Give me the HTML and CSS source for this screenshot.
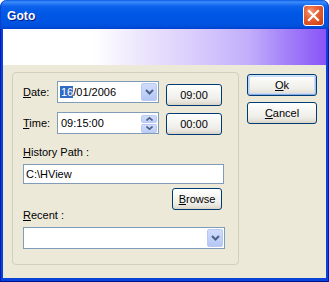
FILE: index.html
```html
<!DOCTYPE html>
<html lang="en">

<head>
    <meta charset="UTF-8">
    <title>Goto</title>
    <link rel="stylesheet" href="styles.css">
</head>

<body>
    <div class="window">
        <div class="titlebar">
            <span class="title">Goto</span>
            <button class="close" type="button" aria-label="Close">
                <svg width="13" height="13" viewBox="0 0 13 13">
                    <path d="M2 2 L11 11 M11 2 L2 11" stroke="#fff" stroke-width="2.2" stroke-linecap="square" />
                </svg>
            </button>
        </div>
        <div class="frame">
            <div class="banner"></div>
            <div class="body">
                <div class="group">
                    <div class="row">
                        <label class="lbl"><u>D</u>ate:</label>
                        <div class="combo">
                            <span class="value"><span class="sel">16</span>/01/2006</span>
                            <span class="drop">
                                <svg width="9" height="6" viewBox="0 0 9 6">
                                    <path d="M1 1 L4.5 4.5 L8 1" fill="none" stroke="#4d6185" stroke-width="2" />
                                </svg>
                            </span>
                        </div>
                        <button class="btn btn-time first" type="button">09:00</button>
                    </div>
                    <div class="row row-time">
                        <label class="lbl"><u>T</u>ime:</label>
                        <div class="combo">
                            <span class="value">09:15:00</span>
                            <span class="spin">
                                <span class="spin-btn">
                                    <svg width="7" height="4" viewBox="0 0 7 4">
                                        <path d="M0.5 3.5 L3.5 0.8 L6.5 3.5" fill="none" stroke="#4d6185" stroke-width="1.6" />
                                    </svg>
                                </span>
                                <span class="spin-btn">
                                    <svg width="7" height="4" viewBox="0 0 7 4">
                                        <path d="M0.5 0.5 L3.5 3.2 L6.5 0.5" fill="none" stroke="#4d6185" stroke-width="1.6" />
                                    </svg>
                                </span>
                            </span>
                        </div>
                        <button class="btn btn-time" type="button">00:00</button>
                    </div>

                    <div class="caption caption-path"><u>H</u>istory Path :</div>
                    <div class="field">C:\HView</div>
                    <div class="browse-row">
                        <button class="btn btn-browse" type="button"><u>B</u>rowse</button>
                    </div>

                    <div class="caption caption-recent"><u>R</u>ecent :</div>
                    <div class="combo combo-wide">
                        <span class="value"></span>
                        <span class="drop">
                            <svg width="9" height="6" viewBox="0 0 9 6">
                                <path d="M1 1 L4.5 4.5 L8 1" fill="none" stroke="#4d6185" stroke-width="2" />
                            </svg>
                        </span>
                    </div>
                </div>

                <div class="actions">
                    <button class="btn btn-side btn-default" type="button"><u>O</u>k</button>
                    <button class="btn btn-side" type="button"><u>C</u>ancel</button>
                </div>
            </div>
        </div>
    </div>
</body>

</html>
```

FILE: styles.css
```css
* {
    box-sizing: border-box;
    margin: 0;
    padding: 0;
}

body {
    background-color: #fff;
    font-family: "Liberation Sans", Arial, sans-serif;
    font-size: 11px;
    color: #000;
}

.window {
    width: 329px;
    height: 282px;
    display: flex;
    flex-direction: column;
}

.titlebar {
    height: 29px;
    display: flex;
    align-items: center;
    justify-content: space-between;
    padding: 0 5px 0 7px;
    border-radius: 7px 7px 0 0;
    background: linear-gradient(to bottom, #0a5ae8 0%, #3d8ff8 7%, #2a7cf5 12%, #0c62ec 22%, #0058e6 45%, #0054e3 75%, #0050dc 90%, #003fd0 100%);
    box-shadow: inset 1px 0 #0a3ed0, inset -1px 0 #0a3ed0;
}

.title {
    color: #fff;
    font-weight: bold;
    font-size: 12px;
    letter-spacing: 0.1px;
    text-shadow: 1px 1px #0a1b80;
    margin-top: 2px;
}

.close {
    width: 21px;
    height: 21px;
    border: 1px solid #fff;
    border-radius: 3px;
    background: radial-gradient(circle at 35% 30%, #f59a78 0%, #e7653a 35%, #d84a1e 75%, #c2380f 100%);
    display: flex;
    align-items: center;
    justify-content: center;
    margin-top: 1px;
}

.frame {
    flex: 1;
    display: flex;
    flex-direction: column;
    padding: 0 3px 4px 3px;
    background: #0842d9;
    box-shadow: inset 1px 0 #0019b8, inset -1px 0 #0019b8, inset 0 -1px #00138c;
}

.banner {
    height: 36px;
    background: linear-gradient(to right, #fff 0%, #fff 28%, #efeafd 40%, #dbcffc 58%, #c2aefb 76%, #a380f9 88%, #8954f7 100%);
}

.body {
    flex: 1;
    display: flex;
    background-color: #ece9d8;
    padding: 7px 0 0 9px;
}

.group {
    width: 227px;
    height: 193px;
    border: 1px solid #d0d0bf;
    border-radius: 4px;
    padding: 8px 0 0 10px;
}

.row {
    display: flex;
    align-items: flex-start;
}

.row-time {
    margin-top: 6px;
}

.lbl {
    width: 34px;
    line-height: 22px;
}

.combo {
    width: 102px;
    height: 22px;
    border: 1px solid #7f9db9;
    background: #fff;
    display: flex;
    align-items: center;
    padding: 1px;
}

.combo .value {
    flex: 1;
    padding-left: 2px;
    line-height: 13px;
    white-space: nowrap;
}

.sel {
    background: #316ac5;
    color: #fff;
    padding: 0 0 0 1px;
    margin-left: -1px;
}

.drop {
    width: 16px;
    height: 18px;
    border: 1px solid #b9c9ef;
    border-radius: 2px;
    background: linear-gradient(to bottom, #d2dcfb 0%, #c1d3fb 50%, #b4c7f5 100%);
    display: flex;
    align-items: center;
    justify-content: center;
}

.spin {
    width: 16px;
    height: 18px;
    display: flex;
    flex-direction: column;
    gap: 1px;
    margin-top: 1px;
}

.spin-btn {
    flex: 1;
    border: 1px solid #b9c9ef;
    border-radius: 2px;
    background: linear-gradient(to bottom, #d2dcfb 0%, #bccff9 100%);
    display: flex;
    align-items: center;
    justify-content: center;
}

.btn {
    font-family: "Liberation Sans", Arial, sans-serif;
    font-size: 11px;
    color: #000;
    height: 22px;
    border: 1px solid #003c74;
    border-radius: 3px;
    background: linear-gradient(to bottom, #ffffff 0%, #f6f6f3 35%, #efeee9 70%, #e3e0d6 90%, #d6d0c5 100%);
}

.btn-time {
    width: 56px;
    margin-left: 7px;
    margin-top: 1px;
}

.btn-time.first {
    margin-top: 3px;
}

.caption {
    line-height: 13px;
}

.caption-path {
    margin-top: 11px;
}

.field {
    width: 201px;
    height: 20px;
    margin-top: 5px;
    border: 1px solid #7f9db9;
    background: #fff;
    padding-left: 2px;
    line-height: 18px;
}

.browse-row {
    width: 201px;
    display: flex;
    justify-content: flex-end;
    padding-right: 2px;
    margin-top: 4px;
}

.btn-browse {
    width: 50px;
}

.caption-recent {
    margin-top: -1px;
}

.combo-wide {
    width: 202px;
    margin-top: 5px;
}

.actions {
    display: flex;
    flex-direction: column;
    gap: 6px;
    margin: 2px 0 0 8px;
}

.btn-side {
    width: 70px;
}

.btn-default {
    box-shadow: inset 0 1px #cee7ff, inset 1px 0 #bcd4f6, inset -1px 0 #a6c2f0, inset 0 -1px #89ade4, inset 0 0 0 2px #c8daf7;
}
```
